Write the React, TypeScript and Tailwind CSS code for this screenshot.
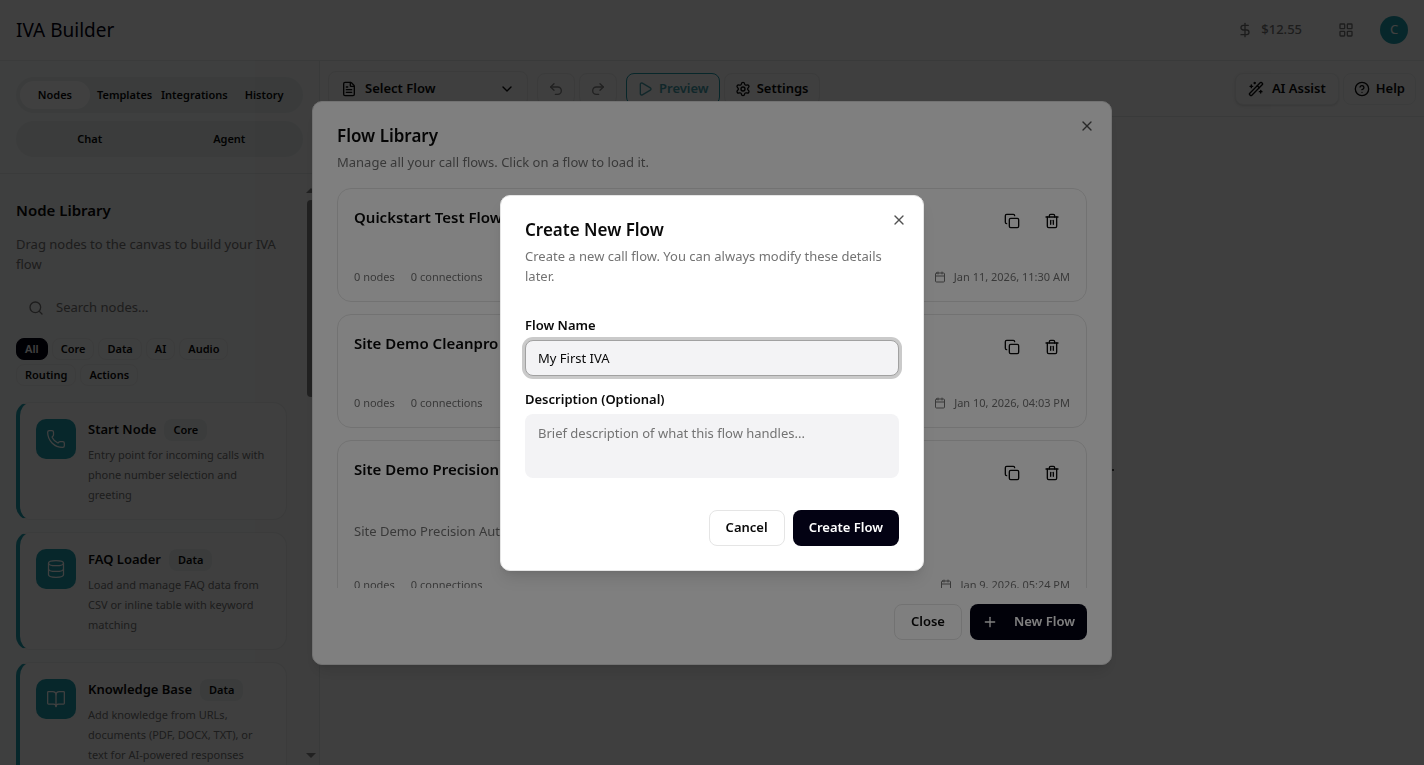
import React, { useState } from 'react';
import {
  BookOpen,
  Calendar,
  ChevronDown,
  CircleHelp,
  Copy,
  Database,
  DollarSign,
  FileText,
  LayoutGrid,
  Phone,
  Play,
  Plus,
  Redo2,
  Search,
  Settings,
  Undo2,
  WandSparkles,
  X,
} from 'lucide-react';

const categories = ['All', 'Core', 'Data', 'AI', 'Audio', 'Routing', 'Actions'];

const nodes = [
  {
    name: 'Start Node',
    category: 'Core',
    icon: Phone,
    description: 'Entry point for incoming calls with phone number selection and greeting',
  },
  {
    name: 'FAQ Loader',
    category: 'Data',
    icon: Database,
    description: 'Load and manage FAQ data from CSV or inline table with keyword matching',
  },
  {
    name: 'Knowledge Base',
    category: 'Data',
    icon: BookOpen,
    description: 'Add knowledge from URLs, documents (PDF, DOCX, TXT), or text for AI-powered responses',
  },
];

const flows = [
  { name: 'Quickstart Test Flow', description: '', updated: 'Jan 11, 2026, 11:30 AM' },
  { name: 'Site Demo Cleanpro', description: '', updated: 'Jan 10, 2026, 04:03 PM' },
  { name: 'Site Demo Precision', description: 'Site Demo Precision Auto', updated: 'Jan 9, 2026, 05:24 PM' },
];

const TrashIcon = () => (
  <svg
    className="size-4"
    viewBox="0 0 24 24"
    fill="none"
    stroke="currentColor"
    strokeWidth="2"
    strokeLinecap="round"
    strokeLinejoin="round"
  >
    <path d="M3 6h18" />
    <path d="M19 6v14c0 1-1 2-2 2H7c-1 0-2-1-2-2V6" />
    <path d="M8 6V4c0-1 1-2 2-2h4c1 0 2 1 2 2v2" />
    <path d="M10 11v6" />
    <path d="M14 11v6" />
  </svg>
);

const Header = () => (
  <header className="flex h-[61px] shrink-0 items-center justify-between border-b border-[#e6eaeb] bg-[#fcfcfc] px-4">
    <h1 className="text-[19px] text-[#030213]">IVA Builder</h1>
    <div className="flex items-center text-[#737373]">
      <button className="flex items-center gap-2 text-[13px] font-medium">
        <DollarSign className="size-4" />
        $12.55
      </button>
      <button aria-label="Apps" className="mr-[26px] ml-9">
        <LayoutGrid className="size-4" />
      </button>
      <button className="size-7 rounded-full bg-[#1f9cab] text-[13px] text-white">C</button>
    </div>
  </header>
);

const Sidebar = () => {
  const [active, setActive] = useState('All');

  return (
    <aside className="flex w-80 shrink-0 flex-col border-r border-[#e6eaeb] bg-[#f8f9f9]">
      <div className="space-y-2 border-b border-[#e6eaeb] p-4 text-[11px] font-semibold">
        <div className="grid h-9 grid-cols-4 rounded-full bg-[#e9efef] p-1">
          <button className="rounded-full bg-white">Nodes</button>
          <button>Templates</button>
          <button>Integrations</button>
          <button>History</button>
        </div>
        <div className="grid h-9 grid-cols-2 rounded-full bg-[#e9efef] p-1">
          <button>Chat</button>
          <button>Agent</button>
        </div>
      </div>

      <div className="mt-2 flex min-h-0 flex-1">
        <div className="min-w-0 flex-1 overflow-hidden py-4 pr-4 pl-4">
          <h2 className="mb-3 text-[15px] leading-6 font-semibold">Node Library</h2>
          <p className="text-[13px] leading-5 text-[#737373]">Drag nodes to the canvas to build your IVA flow</p>

          <label className="mt-4 flex h-9 items-center gap-3 px-3 text-[#737373]">
            <Search className="size-4 shrink-0" />
            <input
              type="text"
              aria-label="Search nodes"
              placeholder="Search nodes..."
              className="w-full min-w-0 text-[13px] outline-none placeholder:text-[#737373]"
            />
          </label>

          <div className="mt-3 flex flex-wrap gap-1 pr-8 text-[11px] font-semibold">
            {categories.map((category) => (
              <button
                key={category}
                onClick={() => setActive(category)}
                className={`h-[22px] rounded-lg border px-2 leading-5 ${
                  active === category ? 'border-[#030213] bg-[#030213] text-white' : 'border-[#eceeee]'
                }`}
              >
                {category}
              </button>
            ))}
          </div>

          <div className="mt-4 space-y-3">
            {nodes.map(({ name, category, icon: Icon, description }) => (
              <div
                key={name}
                className="flex gap-3 rounded-[14px] border border-l-4 border-[#eceeee] border-l-[#1f9cab] bg-[#fcfcfc] px-4 pt-4 pb-[14px]"
              >
                <div className="flex size-10 shrink-0 items-center justify-center rounded-[10px] bg-[#1f9cab] text-white">
                  <Icon className="size-5" strokeWidth={1.5} />
                </div>
                <div className="min-w-0">
                  <div className="flex h-[22px] items-center gap-2">
                    <h3 className="text-[13px] font-semibold whitespace-nowrap">{name}</h3>
                    <span className="h-[22px] rounded-lg bg-[#e9efef] px-[9px] text-[11px] leading-[22px] font-semibold">
                      {category}
                    </span>
                  </div>
                  <p className="mt-1 text-[11px] leading-5 text-[#737373]">{description}</p>
                </div>
              </div>
            ))}
          </div>
        </div>

        {/* scrollbar */}
        <div className="flex w-4 shrink-0 flex-col items-center text-[#858585]">
          <svg className="h-[18px] w-3 shrink-0" viewBox="0 0 12 18" fill="currentColor">
            <path d="M1 11l5-5 5 5z" />
          </svg>
          <div className="h-[197px] w-2 shrink-0 rounded-full bg-[#858585]" />
          <svg className="mt-auto h-[18px] w-3 shrink-0" viewBox="0 0 12 18" fill="currentColor">
            <path d="M1 6l5 5 5-5z" />
          </svg>
        </div>
      </div>
    </aside>
  );
};

const toolButton = 'flex h-8 items-center rounded-lg border border-[#eceeee] bg-[#fcfcfc] text-[13px] font-semibold';

const Toolbar = () => (
  <div className="flex h-14 shrink-0 items-center justify-between border-b border-[#e6eaeb] bg-[#fcfcfc] px-2">
    <div className="flex items-center gap-1">
      <button className="mr-[5px] flex h-9 w-[200px] items-center gap-2 rounded-lg border border-[#eceeee] px-3 text-[13px] font-semibold">
        <FileText className="size-4" />
        Select Flow
        <ChevronDown className="ml-auto size-4" />
      </button>
      <button aria-label="Undo" className={`${toolButton} w-[38px] justify-center text-[#858585]`}>
        <Undo2 className="size-4" />
      </button>
      <button aria-label="Redo" className={`${toolButton} w-[38px] justify-center text-[#858585]`}>
        <Redo2 className="size-4" />
      </button>
      <button className="ml-[5px] flex h-8 items-center gap-[6px] rounded-lg border border-[#1f9cab] px-[10px] text-[13px] font-semibold text-[#479fab]">
        <Play className="size-4" />
        Preview
      </button>
      <button className={`${toolButton} gap-[6px] px-[10px]`}>
        <Settings className="size-4" />
        Settings
      </button>
    </div>
    <div className="flex items-center gap-1">
      <button className={`${toolButton} gap-2 px-3 shadow-sm`}>
        <WandSparkles className="size-4" />
        AI Assist
      </button>
      <button className={`${toolButton} gap-[6px] px-[10px]`}>
        <CircleHelp className="size-4" />
        Help
      </button>
    </div>
  </div>
);

// empty canvas with a single dropped handle
const Canvas = () => (
  <div className="relative flex-1 overflow-hidden">
    <span className="absolute top-[352px] left-[792px] size-[2px] bg-[#505050]" />
  </div>
);

const FlowLibrary = () => (
  <div className="fixed inset-0 flex items-center justify-center bg-black/50">
    <div
      role="dialog"
      aria-labelledby="library-title"
      className="relative w-full max-w-[800px] rounded-[10px] border border-[#e5e5e5] bg-white p-6 shadow-lg"
    >
      <h2 id="library-title" className="text-[17px] leading-5 font-semibold">
        Flow Library
      </h2>
      <p className="mt-[6px] text-[13px] leading-5 text-[#737373]">
        Manage all your call flows. Click on a flow to load it.
      </p>
      <button aria-label="Close" className="absolute top-4 right-4 opacity-70">
        <X className="size-4" />
      </button>

      <div className="mt-4 h-[400px] space-y-3 overflow-x-hidden overflow-y-auto [scrollbar-width:none]">
        {flows.map((flow) => (
          <article key={flow.name} className="rounded-[14px] border border-[#e5e5e5] p-4">
            <div className="flex justify-between">
              <h3 className="text-[15px] leading-6 font-semibold">{flow.name}</h3>
              <div className="flex gap-1">
                <button aria-label="Duplicate flow" className="flex h-8 w-9 items-center justify-center">
                  <Copy className="size-4" />
                </button>
                <button aria-label="Delete flow" className="flex h-8 w-9 items-center justify-center">
                  <TrashIcon />
                </button>
              </div>
            </div>
            {flow.description && (
              <p className="mt-8 mb-9 text-[13px] leading-5 text-[#737373]">{flow.description}</p>
            )}
            <div className="mt-8 flex items-center gap-4 text-[11px] leading-4 text-[#737373]">
              <span>0 nodes</span>
              <span>0 connections</span>
              <span className="ml-auto flex items-center gap-2">
                <Calendar className="size-3" />
                {flow.updated}
              </span>
            </div>
          </article>
        ))}
      </div>

      <div className="mt-4 flex justify-end gap-2 text-[13px] font-semibold">
        <button className="h-9 rounded-lg border border-[#e5e5e5] px-4">Close</button>
        <button className="flex h-9 items-center gap-4 rounded-lg bg-[#030213] px-3 text-white">
          <Plus className="size-4" />
          New Flow
        </button>
      </div>
    </div>
  </div>
);

const CreateFlow = () => {
  const [name, setName] = useState('My First IVA');

  return (
    <div className="fixed inset-0 flex items-center justify-center bg-black/50">
      <form
        role="dialog"
        aria-labelledby="create-title"
        onSubmit={(e) => e.preventDefault()}
        className="relative w-full max-w-[424px] rounded-[10px] border border-[#e5e5e5] bg-white p-6 shadow-lg"
      >
        <h2 id="create-title" className="text-[17px] leading-5 font-semibold">
          Create New Flow
        </h2>
        <p className="mt-[6px] text-[13px] leading-5 text-[#737373]">
          Create a new call flow. You can always modify these details later.
        </p>
        <button type="button" aria-label="Close" className="absolute top-4 right-4 opacity-70">
          <X className="size-4" />
        </button>

        <div className="flex flex-col py-8 text-[13px]">
          <label htmlFor="flow-name" className="leading-[14px] font-semibold">
            Flow Name
          </label>
          <input
            id="flow-name"
            type="text"
            value={name}
            onChange={(e) => setName(e.target.value)}
            className="mt-2 h-9 rounded-lg border border-[#a1a1a1] bg-[#f3f3f5] px-3 ring-[3px] ring-[#cacaca] outline-none"
          />
          <label htmlFor="flow-description" className="mt-4 leading-[14px] font-semibold">
            Description (Optional)
          </label>
          <textarea
            id="flow-description"
            placeholder="Brief description of what this flow handles..."
            className="mt-2 h-16 resize-none rounded-lg border border-transparent bg-[#f3f3f5] px-3 py-2 leading-5 outline-none placeholder:text-[#737373]"
          />
        </div>

        <div className="flex justify-end gap-2 text-[13px] font-semibold">
          <button type="button" className="h-9 rounded-lg border border-[#e5e5e5] px-4">
            Cancel
          </button>
          <button type="submit" className="h-9 rounded-lg bg-[#030213] px-4 text-white">
            Create Flow
          </button>
        </div>
      </form>
    </div>
  );
};

const App = () => (
  <div className="flex h-screen flex-col overflow-hidden bg-white font-['Noto_Sans',sans-serif] text-[#0a0a0a]">
    <Header />
    <div className="flex min-h-0 flex-1">
      <Sidebar />
      <main className="flex min-w-0 flex-1 flex-col bg-[#fcfcfc]">
        <Toolbar />
        <Canvas />
      </main>
    </div>
    <FlowLibrary />
    <CreateFlow />
  </div>
);

export default App;
